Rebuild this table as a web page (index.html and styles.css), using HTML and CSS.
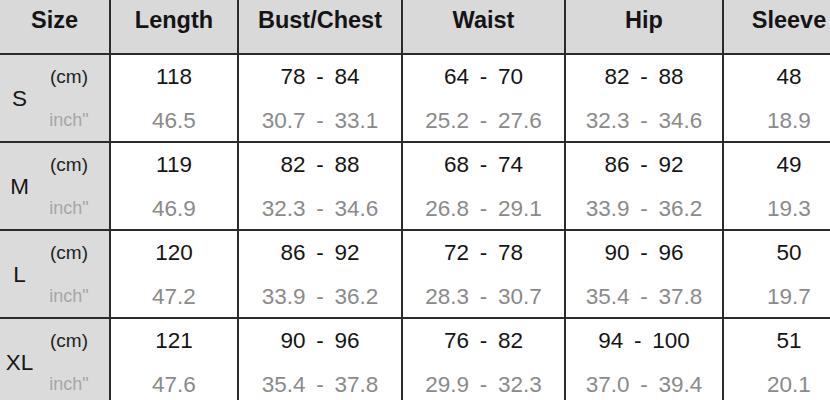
FILE: index.html
```html
<!DOCTYPE html>
<html>
<head>
<meta charset="utf-8">
<link rel="stylesheet" href="styles.css">
</head>
<body>
<div class="chart">
  <div class="hd">Size</div>
  <div class="hd">Length</div>
  <div class="hd">Bust/Chest</div>
  <div class="hd">Waist</div>
  <div class="hd">Hip</div>
  <div class="hd">Sleeve</div>

  <div class="size"><span class="letter">S</span><span class="units"><span class="cm">(cm)</span><span class="inch">inch"</span></span></div>
  <div class="val"><span class="cmv">118</span><span class="inv">46.5</span></div>
  <div class="val"><span class="cmv">78 - 84</span><span class="inv">30.7 - 33.1</span></div>
  <div class="val"><span class="cmv">64 - 70</span><span class="inv">25.2 - 27.6</span></div>
  <div class="val"><span class="cmv">82 - 88</span><span class="inv">32.3 - 34.6</span></div>
  <div class="val"><span class="cmv">48</span><span class="inv">18.9</span></div>

  <div class="size"><span class="letter">M</span><span class="units"><span class="cm">(cm)</span><span class="inch">inch"</span></span></div>
  <div class="val"><span class="cmv">119</span><span class="inv">46.9</span></div>
  <div class="val"><span class="cmv">82 - 88</span><span class="inv">32.3 - 34.6</span></div>
  <div class="val"><span class="cmv">68 - 74</span><span class="inv">26.8 - 29.1</span></div>
  <div class="val"><span class="cmv">86 - 92</span><span class="inv">33.9 - 36.2</span></div>
  <div class="val"><span class="cmv">49</span><span class="inv">19.3</span></div>

  <div class="size"><span class="letter">L</span><span class="units"><span class="cm">(cm)</span><span class="inch">inch"</span></span></div>
  <div class="val"><span class="cmv">120</span><span class="inv">47.2</span></div>
  <div class="val"><span class="cmv">86 - 92</span><span class="inv">33.9 - 36.2</span></div>
  <div class="val"><span class="cmv">72 - 78</span><span class="inv">28.3 - 30.7</span></div>
  <div class="val"><span class="cmv">90 - 96</span><span class="inv">35.4 - 37.8</span></div>
  <div class="val"><span class="cmv">50</span><span class="inv">19.7</span></div>

  <div class="size"><span class="letter">XL</span><span class="units"><span class="cm">(cm)</span><span class="inch">inch"</span></span></div>
  <div class="val"><span class="cmv">121</span><span class="inv">47.6</span></div>
  <div class="val"><span class="cmv">90 - 96</span><span class="inv">35.4 - 37.8</span></div>
  <div class="val"><span class="cmv">76 - 82</span><span class="inv">29.9 - 32.3</span></div>
  <div class="val"><span class="cmv">94 - 100</span><span class="inv">37.0 - 39.4</span></div>
  <div class="val"><span class="cmv">51</span><span class="inv">20.1</span></div>
</div>
</body>
</html>
```

FILE: styles.css
```css
html, body {
  margin: 0;
  padding: 0;
  background: #ffffff;
  overflow: hidden;
}

.chart {
  display: grid;
  grid-template-columns: 109px 126px 162px 161px 156px 130px;
  grid-template-rows: 53px 86px 86px 86px 86px;
  gap: 2px;
  background: #2b2b2b;
  width: 854px;
  font-family: "Liberation Sans", Arial, sans-serif;
}

.hd {
  background: #d9d9d9;
  color: #141414;
  font-weight: bold;
  font-size: 23.5px;
  display: flex;
  align-items: center;
  justify-content: center;
  padding-bottom: 12px;
  box-sizing: border-box;
}

.size {
  background: #dbdbdb;
  display: grid;
  grid-template-columns: 39px 60px;
  align-items: center;
}

.letter {
  text-align: center;
  font-size: 22.5px;
  color: #161616;
}

.units {
  display: flex;
  flex-direction: column;
  align-items: center;
  align-self: stretch;
}

.cm {
  height: 44px;
  line-height: 44px;
  font-size: 19px;
  color: #222222;
}

.inch {
  height: 44px;
  line-height: 42px;
  font-size: 18px;
  color: #a6a6a6;
}

.val {
  background: #ffffff;
  display: flex;
  flex-direction: column;
  align-items: center;
  font-size: 22.5px;
  word-spacing: 4.5px;
}

.cmv {
  height: 44px;
  line-height: 44px;
  color: #151515;
}

.inv {
  height: 44px;
  line-height: 44px;
  color: #8a8a8a;
}
```
